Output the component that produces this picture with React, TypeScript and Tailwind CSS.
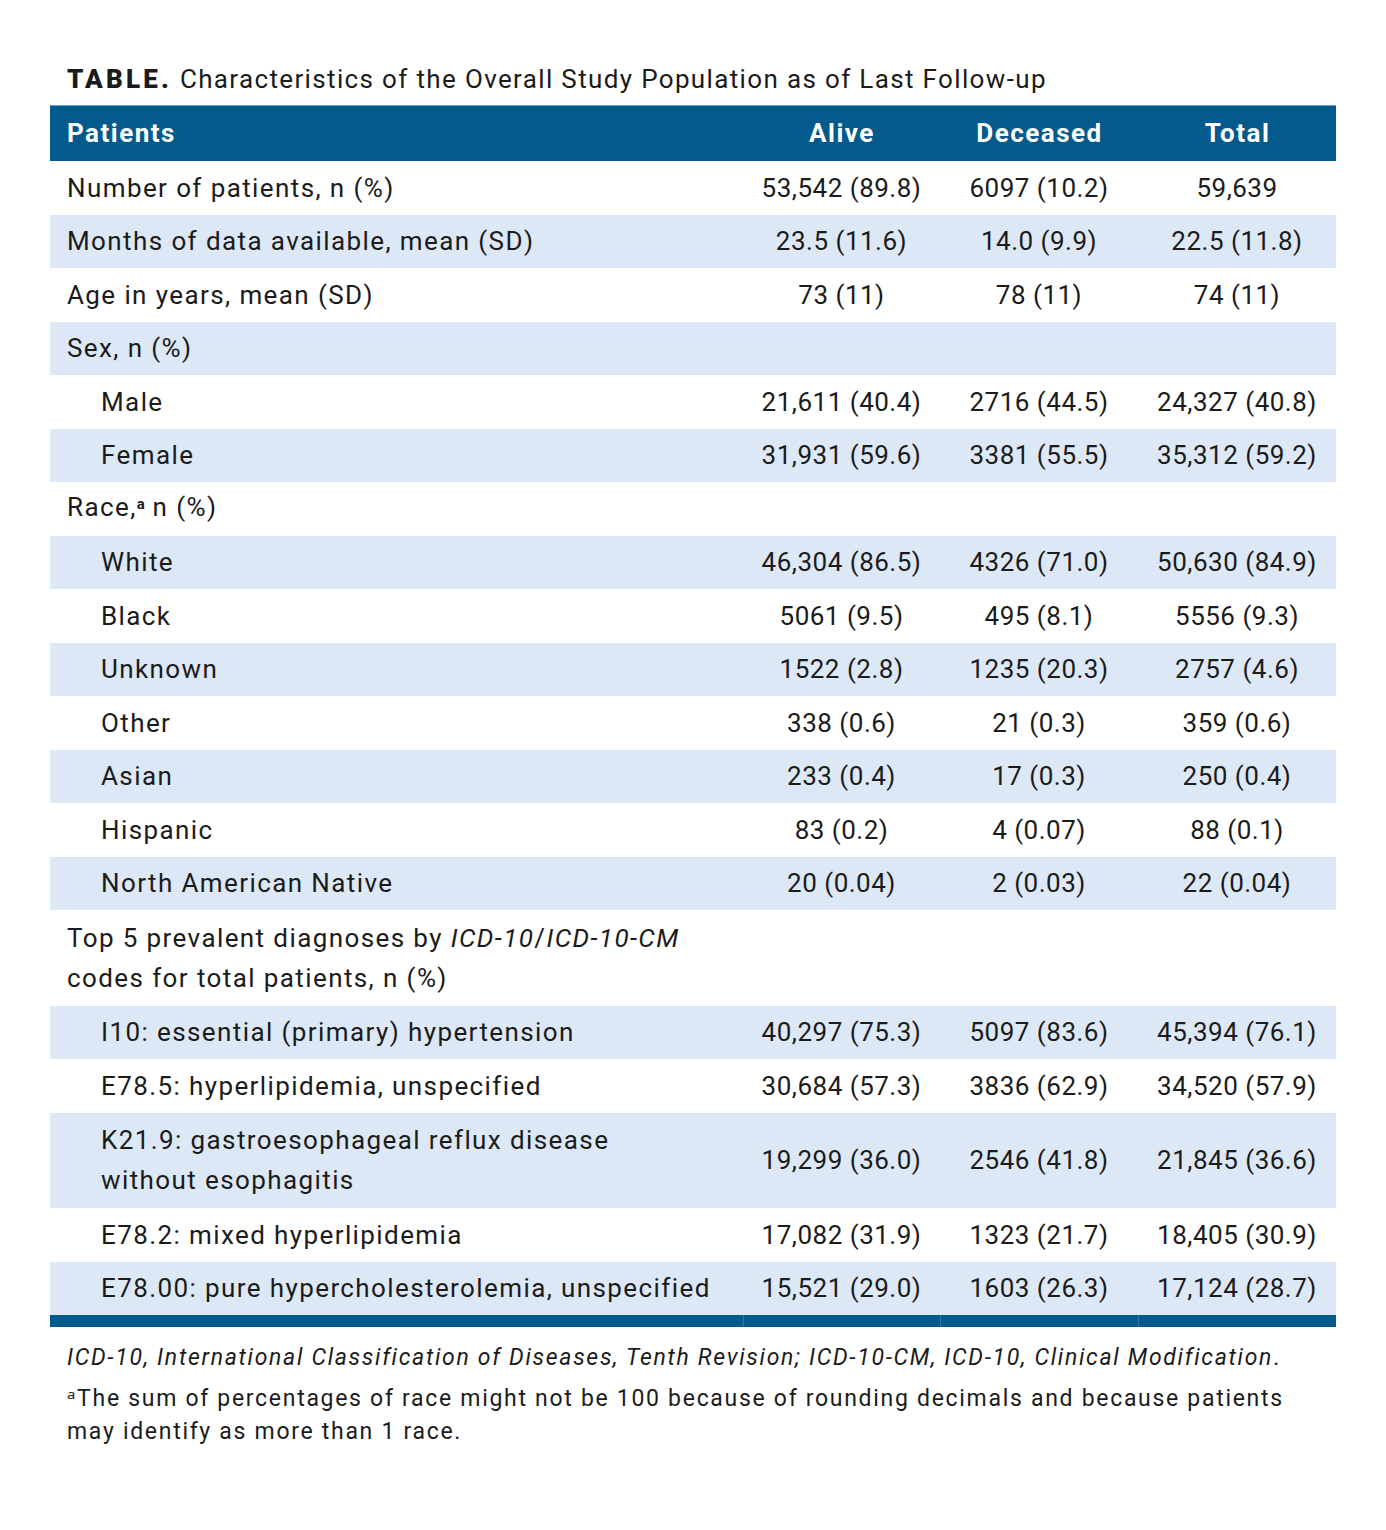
import React from "react";

type Row = {
  label: React.ReactNode;
  indent?: boolean;
  vals?: [string, string, string];
  tall?: boolean;
};

const rows: Row[] = [
  { label: "Number of patients, n (%)", vals: ["53,542 (89.8)", "6097 (10.2)", "59,639"] },
  { label: "Months of data available, mean (SD)", vals: ["23.5 (11.6)", "14.0 (9.9)", "22.5 (11.8)"] },
  { label: "Age in years, mean (SD)", vals: ["73 (11)", "78 (11)", "74 (11)"] },
  { label: "Sex, n (%)" },
  { label: "Male", indent: true, vals: ["21,611 (40.4)", "2716 (44.5)", "24,327 (40.8)"] },
  { label: "Female", indent: true, vals: ["31,931 (59.6)", "3381 (55.5)", "35,312 (59.2)"] },
  {
    label: (
      <>
        Race,<span className="text-[15px] font-bold relative top-[-7px] tracking-normal">a</span> n (%)
      </>
    ),
  },
  { label: "White", indent: true, vals: ["46,304 (86.5)", "4326 (71.0)", "50,630 (84.9)"] },
  { label: "Black", indent: true, vals: ["5061 (9.5)", "495 (8.1)", "5556 (9.3)"] },
  { label: "Unknown", indent: true, vals: ["1522 (2.8)", "1235 (20.3)", "2757 (4.6)"] },
  { label: "Other", indent: true, vals: ["338 (0.6)", "21 (0.3)", "359 (0.6)"] },
  { label: "Asian", indent: true, vals: ["233 (0.4)", "17 (0.3)", "250 (0.4)"] },
  { label: "Hispanic", indent: true, vals: ["83 (0.2)", "4 (0.07)", "88 (0.1)"] },
  { label: "North American Native", indent: true, vals: ["20 (0.04)", "2 (0.03)", "22 (0.04)"] },
  {
    label: (
      <>
        Top 5 prevalent diagnoses by <i>ICD-10</i>/<i>ICD-10-CM</i>
        <br />
        codes for total patients, n (%)
      </>
    ),
    tall: true,
  },
  { label: "I10: essential (primary) hypertension", indent: true, vals: ["40,297 (75.3)", "5097 (83.6)", "45,394 (76.1)"] },
  { label: "E78.5: hyperlipidemia, unspecified", indent: true, vals: ["30,684 (57.3)", "3836 (62.9)", "34,520 (57.9)"] },
  {
    label: (
      <>
        K21.9: gastroesophageal reflux disease
        <br />
        without esophagitis
      </>
    ),
    indent: true,
    tall: true,
    vals: ["19,299 (36.0)", "2546 (41.8)", "21,845 (36.6)"],
  },
  { label: "E78.2: mixed hyperlipidemia", indent: true, vals: ["17,082 (31.9)", "1323 (21.7)", "18,405 (30.9)"] },
  { label: "E78.00: pure hypercholesterolemia, unspecified", indent: true, vals: ["15,521 (29.0)", "1603 (26.3)", "17,124 (28.7)"] },
];

const grid = "grid grid-cols-[693px_197px_198px_198px]";

export default function App() {
  return (
    <div
      className="w-[1386px] h-[1530px] bg-white px-[50px] pt-[58px] text-[#1b1b1b]"
      style={{ fontFamily: "Roboto, 'Noto Sans', sans-serif" }}
    >
      <div className="h-[42px] leading-[42px] pl-[17px] text-[26px] mb-[5px] tracking-[1.35px]">
        <span className="font-black tracking-[3.2px]">TABLE.</span> Characteristics of the Overall Study Population as of Last Follow-up
      </div>

      <div className="w-[1286px]">
        <div className={`${grid} h-[56px] bg-[#035a8c] border-t border-[#6f9dbf] text-white font-bold text-[26px] items-center tracking-[1.5px]`}>
          <div className="pl-[17px]">Patients</div>
          <div className="text-center pl-[1px]">Alive</div>
          <div className="text-center pl-[1px]">Deceased</div>
          <div className="text-center pl-[1px]">Total</div>
        </div>

        {rows.map((r, i) => (
          <div
            key={i}
            className={`${grid} items-center text-[26px] ${
              r.tall ? "h-[95.5px] leading-[40px]" : "h-[53.5px] leading-[40px]"
            } ${i % 2 === 1 ? "bg-[#dde8f6]" : "bg-white"}`}
          >
            <div className={`tracking-[1.4px] ${r.indent ? "pl-[51px]" : "pl-[17px]"}`}>{r.label}</div>
            {(r.vals ?? ["", "", ""]).map((v, j) => (
              <div key={j} className="text-center tracking-[0.5px]">
                {v}
              </div>
            ))}
          </div>
        ))}

        <div className={`${grid} h-[12px] bg-[#035a8c]`}>
          <div />
          <div className="border-l border-[#2f77a6]" />
          <div className="border-l border-[#2f77a6]" />
          <div className="border-l border-[#2f77a6]" />
        </div>
      </div>

      <div className="pl-[17px] pr-[20px] text-[23px] leading-[33px] tracking-[1.7px]">
        <p className="mt-[14px] italic">
          ICD-10, International Classification of Diseases, Tenth Revision; ICD-10-CM, ICD-10, Clinical Modification<span className="not-italic">.</span>
        </p>
        <p className="mt-[8px]">
          ᵃThe sum of percentages of race might not be 100 because of rounding decimals and because patients may identify as more than 1 race.
        </p>
      </div>
    </div>
  );
}
